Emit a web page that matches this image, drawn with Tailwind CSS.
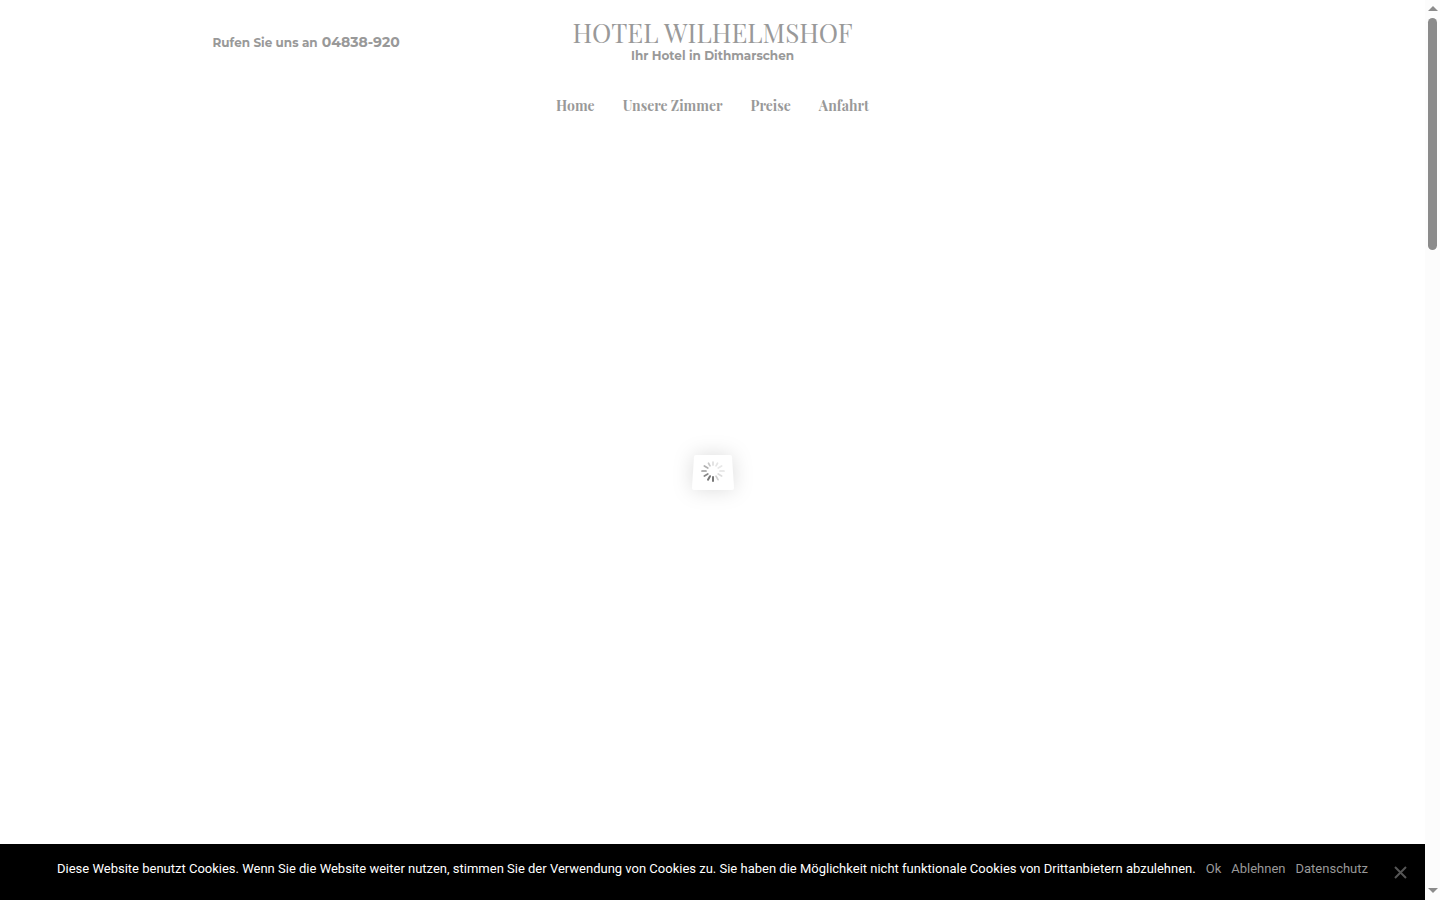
<!DOCTYPE html>
<html lang="de">
<head>
    <meta charset="UTF-8">
    <meta name="viewport" content="width=device-width, initial-scale=1.0">
    <title>Hotel Wilhelmshof</title>
    <script src="https://cdn.jsdelivr.net/npm/@tailwindcss/browser@4"></script>
</head>
<body class="flex h-screen overflow-hidden bg-white">
    <div class="relative flex min-w-0 flex-1 flex-col">
        <header class="mx-auto w-full max-w-[1000px] text-[#999999]">
            <div class="grid grid-cols-[1fr_auto_1fr] pt-[18px]">
                <p class="flex items-baseline gap-1 pt-[14px] font-['Montserrat','Inter',sans-serif] text-xs leading-5 font-bold">
                    Rufen Sie uns an
                    <a href="tel:04838920" class="text-sm leading-5">04838-920</a>
                </p>
                <div class="text-center">
                    <h1 class="font-['Playfair_Display','Liberation_Serif',serif] text-[26px] leading-[30px]"><a href="#">HOTEL WILHELMSHOF</a></h1>
                    <p class="font-['Montserrat','Inter',sans-serif] text-xs leading-4 font-bold">Ihr Hotel in Dithmarschen</p>
                </div>
            </div>
            <nav class="flex justify-center gap-7 pt-8 font-['Playfair_Display','Liberation_Serif',serif] text-sm leading-5 font-bold">
                <a href="#">Home</a>
                <a href="#">Unsere Zimmer</a>
                <a href="#">Preise</a>
                <a href="#">Anfahrt</a>
            </nav>
        </header>

        <!-- Loader -->
        <main class="flex flex-1 items-center justify-center pb-4">
            <svg class="overflow-visible drop-shadow-[0_0_10px_rgba(0,0,0,0.14)]" width="42" height="35" viewBox="0 0 42 35" role="img" aria-label="Laden">
                <path d="M4 0H38Q40 0 40 2L42 33Q42 35 40 35H2Q0 35 0 33L2 2Q2 0 4 0Z" fill="#fff"/>
                <g transform="translate(21 16)" stroke-width="1.7" stroke-linecap="round">
                    <path d="M0-6V-9" stroke="#dedede"/>
                    <path d="M0-6V-9" stroke="#e5e5e5" transform="rotate(30)"/>
                    <path d="M0-6V-10" stroke="#e8e8e8" transform="rotate(60)"/>
                    <path d="M0-7V-11" stroke="#e3e3e3" transform="rotate(90)"/>
                    <path d="M0-6V-10" stroke="#dddddd" transform="rotate(120)"/>
                    <path d="M0-6V-10" stroke="#d0d0d0" transform="rotate(150)"/>
                    <path d="M0-6V-10" stroke="#777777" stroke-width="2" transform="rotate(180)"/>
                    <path d="M0-6V-10" stroke="#777777" stroke-width="2" transform="rotate(210)"/>
                    <path d="M0-6V-10" stroke="#888888" transform="rotate(240)"/>
                    <path d="M0-7V-11" stroke="#999999" transform="rotate(270)"/>
                    <path d="M0-6V-10" stroke="#b0b0b0" transform="rotate(300)"/>
                    <path d="M0-6V-9" stroke="#c8c8c8" transform="rotate(330)"/>
                </g>
            </svg>
        </main>

        <!-- Cookie-Hinweis -->
        <div class="relative flex min-h-14 items-start justify-center gap-[10px] bg-black pt-[15px] font-['Roboto',sans-serif] text-[13px] leading-5 text-white">
            <span>Diese Website benutzt Cookies. Wenn Sie die Website weiter nutzen, stimmen Sie der Verwendung von Cookies zu. Sie haben die Möglichkeit nicht funktionale Cookies von Drittanbietern abzulehnen.</span>
            <a href="#" class="text-[#999999]">Ok</a>
            <a href="#" class="text-[#999999]">Ablehnen</a>
            <a href="#" class="text-[#999999]">Datenschutz</a>
            <button type="button" aria-label="Schließen" class="absolute top-[22px] right-[18px] text-[#555555]">
                <svg width="13" height="13" viewBox="0 0 13 13" fill="none" stroke="currentColor" stroke-width="2"><path d="M1 1L12 12M12 1L1 12"/></svg>
            </button>
        </div>
    </div>

    <!-- Scrollleiste -->
    <div class="flex w-[15px] shrink-0 flex-col items-center bg-[#fcfcfc] text-[#8b8b8b]" aria-hidden="true">
        <svg class="mt-[5px] mb-[7px] h-[6px] w-[10px] shrink-0" viewBox="0 0 10 6" fill="currentColor"><path d="M0 6L5 1L10 6Z"/></svg>
        <div class="h-[232px] w-[9px] rounded-full bg-[#8b8b8b]"></div>
        <svg class="mt-auto mb-[6px] h-[6px] w-[10px] shrink-0" viewBox="0 0 10 6" fill="currentColor"><path d="M0 0L5 5L10 0Z"/></svg>
    </div>
</body>
</html>
